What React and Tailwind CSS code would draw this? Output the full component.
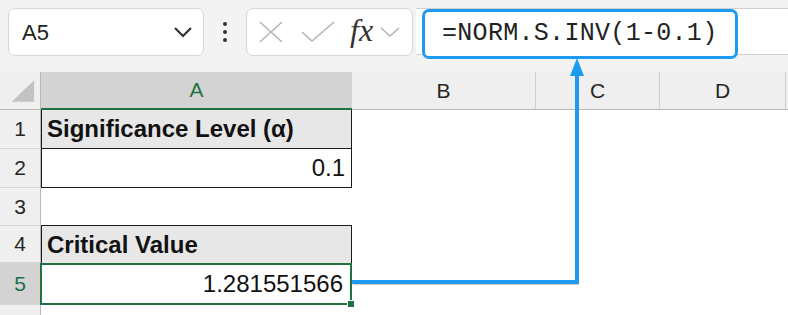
import React from "react";

const cellFont = { fontFamily: "'Liberation Sans', Arial, sans-serif" };

function RowHead({ n, selected }) {
  return (
    <div
      className={`flex items-center justify-center border-r border-b border-r-[#b9b9b9] border-b-[#d6d6d6] text-[21px] ${
        selected ? "bg-[#d3d3d3] text-[#1f7244]" : "bg-[#efefef] text-[#262626]"
      }`}
    >
      {n}
    </div>
  );
}

function ColHead({ label, selected }) {
  return (
    <div
      className={`flex items-center justify-center text-[21px] ${
        selected
          ? "bg-[#d3d3d3] text-[#1f7244] border-b-2 border-b-[#1f7244]"
          : "bg-[#efefef] text-[#262626] border-b border-b-[#b9b9b9] border-r border-r-[#cfcfcf]"
      }`}
    >
      {label}
    </div>
  );
}

export default function App() {
  return (
    <div
      className="relative w-[788px] h-[315px] overflow-hidden bg-[#f3f3f3]"
      style={cellFont}
    >
      {/* Top bar */}
      <div className="flex items-start h-[72px] pt-2">
        {/* Name box */}
        <div className="ml-2 w-[196px] h-[48px] bg-white border border-[#d6d6d6] rounded-[7px] flex items-center justify-between pl-[13px] pr-[10px]">
          <span className="text-[22px] text-[#222]">A5</span>
          <svg width="20" height="12" viewBox="0 0 20 12">
            <path d="M2 2 L10 10 L18 2" fill="none" stroke="#333" strokeWidth="2.2" />
          </svg>
        </div>
        {/* dots */}
        <div className="w-[42px] h-[48px] flex flex-col items-center justify-center gap-[4px]">
          <div className="w-[4px] h-[4px] rounded-full bg-[#333]" />
          <div className="w-[4px] h-[4px] rounded-full bg-[#333]" />
          <div className="w-[4px] h-[4px] rounded-full bg-[#333]" />
        </div>
        {/* fx box */}
        <div className="w-[167px] h-[48px] bg-white border border-[#d6d6d6] rounded-[7px] flex items-center pl-[11px]">
          <svg width="26" height="24" viewBox="0 0 26 24">
            <path d="M2 2 L24 22 M24 2 L2 22" stroke="#b5b5b5" strokeWidth="1.6" fill="none" />
          </svg>
          <svg width="36" height="24" viewBox="0 0 36 24" className="ml-[16px]">
            <path d="M2 12 L12 21 L34 2" stroke="#b5b5b5" strokeWidth="1.6" fill="none" />
          </svg>
          <span
            className="ml-[14px] text-[32px] italic text-[#333] leading-none -mt-[4px]"
            style={{ fontFamily: "'Liberation Serif', 'Times New Roman', serif" }}
          >
            fx
          </span>
          <svg width="22" height="12" viewBox="0 0 22 12" className="ml-[6px]">
            <path d="M2 2 L11 10 L20 2" fill="none" stroke="#b5b5b5" strokeWidth="1.6" />
          </svg>
        </div>
        {/* formula strip */}
        <div className="flex-1 ml-[3px] h-[47px] bg-white border-y border-[#d0d0d0] relative">
          <div className="absolute left-[6px] top-0 w-[316px] h-[50px] border-[3px] border-[#1e9bf0] rounded-[7px] bg-white flex items-center pl-[17px]">
            <span
              className="text-[25px] text-[#222] tracking-[0.3px]"
              style={{ fontFamily: "'Liberation Mono', 'DejaVu Sans Mono', monospace" }}
            >
              =NORM.S.INV(1-0.1)
            </span>
          </div>
        </div>
      </div>

      {/* Grid */}
      <div className="grid grid-cols-[41px_311px_184px_124px_126px_1fr] grid-rows-[38px_39px_39px_38px_37px_42px_40px] bg-white">
        {/* header row */}
        <div className="bg-[#efefef] border-r border-b border-[#b9b9b9] flex items-end justify-end">
          <svg width="41" height="38" viewBox="0 0 41 38">
            <polygon points="35,9 35,31 12,31" fill="#c3c3c3" />
          </svg>
        </div>
        <ColHead label="A" selected />
        <ColHead label="B" />
        <ColHead label="C" />
        <ColHead label="D" />
        <div className="bg-[#efefef] border-b border-b-[#b9b9b9]" />

        {/* row 1 */}
        <RowHead n="1" />
        <div className="bg-[#e7e7e7] border-l border-r border-b border-[#1a1a1a] flex items-center pl-[5px] text-[24px] font-bold text-[#111]">
          Significance Level (α)
        </div>
        <div className="col-span-4" />

        {/* row 2 */}
        <RowHead n="2" />
        <div className="bg-white border-l border-r border-b border-[#1a1a1a] flex items-center justify-end pr-[6px] text-[24px] text-[#111]">
          0.1
        </div>
        <div className="col-span-4" />

        {/* row 3 */}
        <RowHead n="3" />
        <div className="border-b border-[#1a1a1a]" />
        <div className="col-span-4" />

        {/* row 4 */}
        <RowHead n="4" />
        <div className="bg-[#e7e7e7] border-l border-r border-[#1a1a1a] flex items-center pl-[5px] text-[24px] font-bold text-[#111]">
          Critical Value
        </div>
        <div className="col-span-4" />

        {/* row 5 */}
        <RowHead n="5" selected />
        <div className="relative -ml-[1px] border-2 border-[#1f7244] bg-white flex items-center justify-end pr-[7px] text-[24px] text-[#111]">
          1.281551566
          <div className="absolute -right-[5px] -bottom-[5px] w-[8px] h-[8px] bg-[#1f7244] border border-white" />
        </div>
        <div className="col-span-4" />

        {/* row 6 */}
        <RowHead n="" />
        <div className="col-span-5" />
      </div>

      {/* Arrow overlay */}
      <svg
        className="absolute left-0 top-0 pointer-events-none"
        width="788"
        height="315"
        viewBox="0 0 788 315"
      >
        <path d="M353 284 H578 V72" fill="none" stroke="#7a7a7a" strokeOpacity="0.35" strokeWidth="2" />
        <path d="M352 282 H577 V72" fill="none" stroke="#1e9bf0" strokeWidth="4" />
        <polygon points="577,58 570,76 584,76" fill="#1e9bf0" />
      </svg>
    </div>
  );
}
